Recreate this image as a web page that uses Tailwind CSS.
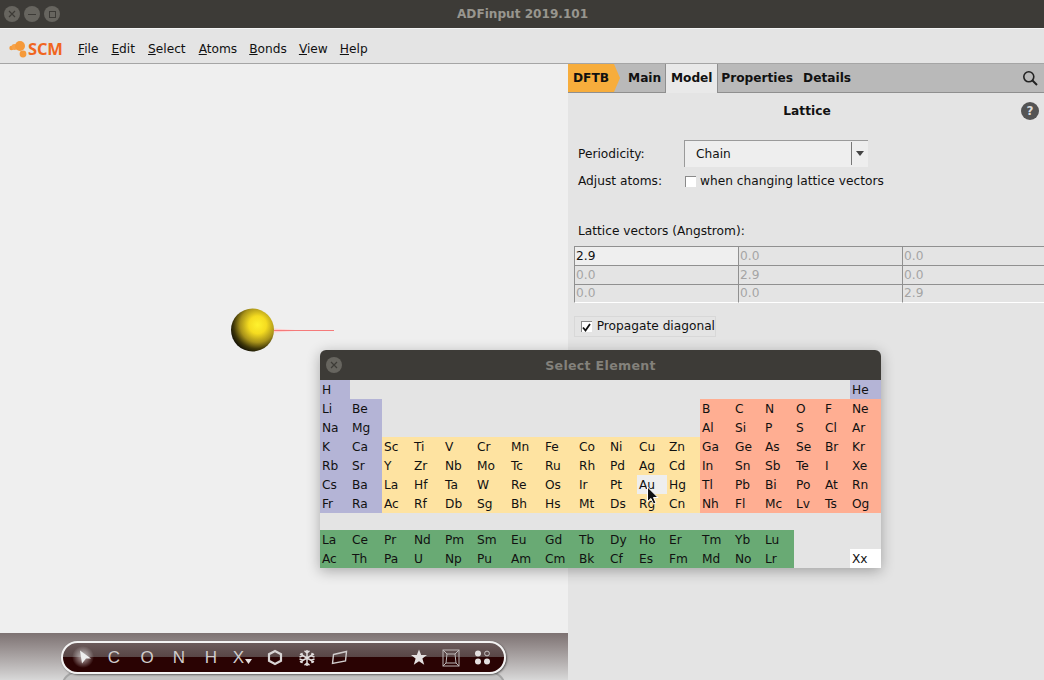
<!DOCTYPE html>
<html lang="en">
<head>
<meta charset="UTF-8">
<title>ADFinput 2019.101</title>
<script src="https://cdn.jsdelivr.net/npm/@tailwindcss/browser@4"></script>
</head>
<body class="w-[1044px] h-[680px] overflow-hidden relative bg-[#efefef] text-[#111] font-['DejaVu_Sans',sans-serif] text-[12.2px] leading-none">

<!-- title bar -->
<header class="h-[29px] bg-[#3d3b37] border-b border-[#f4f4f4] flex items-center relative">
  <div class="flex gap-[4px] pl-[4px]">
    <span class="w-4 h-4 rounded-full bg-[#67655f] flex items-center justify-center"><svg width="8" height="8" viewBox="0 0 8 8" stroke="#3d3b37" stroke-width="1.2"><path d="M1 1l6 6M7 1l-6 6"/></svg></span>
    <span class="w-4 h-4 rounded-full bg-[#67655f] flex items-center justify-center"><span class="w-2 h-px bg-[#3d3b37]"></span></span>
    <span class="w-4 h-4 rounded-full bg-[#67655f] flex items-center justify-center"><span class="w-[7px] h-[7px] border border-[#3d3b37]"></span></span>
  </div>
  <div class="absolute left-[457px] top-[8px] font-bold text-[#98968f] text-[12.1px]">ADFinput 2019.101</div>
</header>

<!-- menu bar -->
<nav class="h-[35px] bg-[#e4e4e4] border-b border-[#a5a5a5] flex items-center pt-[6px]">
  <div class="flex items-center pl-[9px] w-[78px]">
    <svg width="20" height="18" viewBox="0 0 20 18" fill="#f59a3a"><circle cx="2.5" cy="8" r="2.2"/><circle cx="5.5" cy="7" r="3" fill="#f6a24a"/><circle cx="11" cy="6" r="5"/><circle cx="14" cy="14" r="3.4"/></svg>
    <span class="font-['Open_Sans',sans-serif] font-bold text-[16.5px] text-[#f0661f] -ml-[1px] tracking-[-0.2px]">SCM</span>
  </div>
  <div class="flex gap-[13px] pt-[1px]">
    <span><u>F</u>ile</span><span><u>E</u>dit</span><span><u>S</u>elect</span><span><u>A</u>toms</span><span class="-ml-[1px]"><u>B</u>onds</span><span class="-ml-[1px]"><u>V</u>iew</span><span class="-ml-[1px]"><u>H</u>elp</span>
  </div>
</nav>

<div class="flex h-[616px]">
  <!-- molecule viewport -->
  <main class="w-[568px] flex flex-col">
    <div class="flex-1 relative bg-[#efefef]">
      <svg class="absolute left-[225px] top-[240px]" width="115" height="52" viewBox="0 0 115 52">
        <defs>
          <radialGradient id="ball" cx="0.62" cy="0.38" r="0.68">
            <stop offset="0" stop-color="#fff22e"/>
            <stop offset="0.3" stop-color="#f5dc20"/>
            <stop offset="0.6" stop-color="#a8921a"/>
            <stop offset="0.82" stop-color="#403808"/>
            <stop offset="1" stop-color="#0e0d05"/>
          </radialGradient>
        </defs>
        <path d="M49 24.5L70 26V27L49 28.5Z" fill="#ffd0d0"/>
        <rect x="49" y="26" width="60" height="1" fill="#f57a7a"/>
        <circle cx="27.5" cy="26" r="21.5" fill="url(#ball)"/>
      </svg>
    </div>
    <!-- bottom toolbar -->
    <div class="h-[47px] bg-gradient-to-b from-[#7d7272] to-[#d8d8d8] pl-[61px] pt-[8px] relative overflow-hidden">
      <div class="absolute left-[61px] top-[38px] w-[445px] h-[33px] rounded-full border-2 border-[#9c9c9c]/80 bg-[#c4c4c4]"></div>
      <div class="w-[445px] h-[33px] rounded-full border-2 border-[#f3f3f3] shadow-[1px_1px_2px_rgba(0,0,0,0.5)] overflow-hidden relative bg-[linear-gradient(#6b5b5b_0,#574545_50%,#2a0303_50%,#2a0303_100%)] flex items-center text-[#d0cccc] text-[17px] font-['Liberation_Sans',sans-serif]">
        <span class="w-[35px] flex justify-end pr-[5px]"><svg width="16" height="17" viewBox="0 0 16 17" class="overflow-visible"><defs><radialGradient id="gl"><stop offset="0" stop-color="#fff" stop-opacity=".7"/><stop offset="1" stop-color="#fff" stop-opacity="0"/></radialGradient></defs><circle cx="6" cy="8" r="11" fill="url(#gl)"/><path d="M3 1.5L14 9.5H9L5 14.5Z" fill="#eee"/></svg></span>
        <span class="w-[32px] flex justify-center">C</span>
        <span class="w-[32px] flex justify-center ml-[1px]">O</span>
        <span class="w-[32px] flex justify-center">N</span>
        <span class="w-[32px] flex justify-center">H</span>
        <span class="w-[32px] flex justify-center">X<svg class="mt-[10px] ml-[1px]" width="8" height="6" viewBox="0 0 8 6" fill="#e4e0e0"><path d="M0 0H7L3.5 5Z"/></svg></span>
        <span class="w-[32px] flex justify-center"><svg width="16" height="17" viewBox="0 0 16 17" fill="none" stroke="#d8d4d4" stroke-width="2.2"><path d="M8 2L14 5.2V11.8L8 15L2 11.8V5.2Z"/></svg></span>
        <span class="w-[32px] flex justify-center"><svg width="18" height="18" viewBox="0 0 18 18" fill="none" stroke="#e0dcdc" stroke-width="1.5"><path d="M9 1V17M2 5L16 13M16 5L2 13M6.5 1.8L9 4L11.5 1.8M6.5 16.2L9 14L11.5 16.2M1.5 8L4.5 7L3.8 3.8M16.5 8L13.5 7L14.2 3.8M1.5 10L4.5 11L3.8 14.2M16.5 10L13.5 11L14.2 14.2"/></svg></span>
        <span class="w-[32px] flex justify-center"><svg width="17" height="15" viewBox="0 0 17 15" fill="none" stroke="#d0cccc" stroke-width="1.4"><path d="M2.5 4.5L15.5 1.5L14.5 11L1.5 13.5Z"/></svg></span>
        <span class="w-[32px] flex justify-center ml-[48px]"><svg width="18" height="17" viewBox="0 0 18 17" fill="#e4e0e0"><path d="M9 .5L11.2 6H17L12.4 9.6L14.2 15.8L9 12.2L3.8 15.8L5.6 9.6L1 6H6.8Z"/></svg></span>
        <span class="w-[32px] flex justify-center"><svg width="18" height="18" viewBox="0 0 18 18" fill="none" stroke="#bdb8b8" stroke-width="1"><rect x="1" y="1" width="16" height="16"/><path d="M5 5H13L14 14H4ZM1 1L5 5M17 1L13 5M1 17L4 14M17 17L14 14"/></svg></span>
        <span class="w-[32px] flex justify-center -ml-[1px]"><svg width="17" height="17" viewBox="0 0 17 17" fill="#e4e0e0"><circle cx="4" cy="4.5" r="3"/><circle cx="13" cy="4.5" r="2.4" fill="none" stroke="#c8c4c4"/><circle cx="4" cy="12.5" r="3"/><circle cx="13" cy="12.5" r="3"/></svg></span>
      </div>
    </div>
  </main>

  <!-- right panel -->
  <aside class="w-[476px] bg-[#e4e4e4] flex flex-col">
    <div class="h-[29px] bg-[#b9b9b9] border-b border-[#8f8f8f] flex items-center font-bold relative">
      <div class="h-[28px] w-[52px] bg-[#f7ad3c] [clip-path:polygon(0_0,46px_0,52px_50%,46px_100%,0_100%)] flex items-center pl-[5px]">DFTB</div>
      <span class="ml-[8px]">Main</span>
      <div class="ml-[4px] h-[29px] w-[53px] bg-[#e9e9e9] border-x border-[#8f8f8f] flex items-center justify-center">Model</div>
      <span class="ml-[3px]">Properties</span>
      <span class="ml-[10px]">Details</span>
      <svg class="absolute right-[6px] top-[6px]" width="16" height="16" viewBox="0 0 16 16" fill="none" stroke="#222" stroke-width="1.6"><circle cx="6.8" cy="6.8" r="5"/><path d="M10.5 10.5L15 15" stroke-width="2"/></svg>
    </div>

    <div class="relative h-[36px] flex items-center justify-center font-bold pt-[1px] pl-[2px]">
      Lattice
      <span class="absolute right-[5px] top-[9px] w-[18px] h-[18px] rounded-full bg-[#545454] text-[#ddd] text-[12px] flex items-center justify-center">?</span>
    </div>

    <div class="flex items-center h-[27px] mt-[11px] pl-[10px]">
      <span class="w-[106px] pt-[1px]">Periodicity:</span>
      <div class="w-[184px] h-[27px] bg-[#eeeeee] border-t border-l border-[#9a9a9a] flex items-center relative">
        <span class="pl-[11px]">Chain</span>
        <div class="absolute right-[0px] top-[1px] h-[23px] w-[17px] border-l border-[#777] flex items-center justify-center"><svg width="8" height="5" viewBox="0 0 8 5" fill="#444"><path d="M0 0H8L4 5Z"/></svg></div>
      </div>
    </div>

    <div class="flex items-center h-[20px] mt-[4px] pl-[10px]">
      <span class="w-[107px]">Adjust atoms:</span>
      <span class="w-[11px] h-[11px] bg-white border-t border-l border-[#8a8a8a]"></span>
      <span class="ml-[4px]">when changing lattice vectors</span>
    </div>

    <div class="pl-[10px] mt-[34px] h-[14px]">Lattice vectors (Angstrom):</div>

    <div class="mt-[7px] ml-[6px] w-[470px] grid grid-cols-[164px_164px_142px] grid-rows-[19px_19px_19px] text-[#a4a4a4]">
      <div class="border-t border-l border-[#909090] pl-[1px] flex items-center bg-[#efefef] text-[#111]">2.9</div>
      <div class="border-t border-l border-[#909090] pl-[1px] flex items-center">0.0</div>
      <div class="border-t border-l border-[#909090] pl-[1px] flex items-center">0.0</div>
      <div class="border-t border-l border-[#909090] pl-[1px] flex items-center">0.0</div>
      <div class="border-t border-l border-[#909090] pl-[1px] flex items-center">2.9</div>
      <div class="border-t border-l border-[#909090] pl-[1px] flex items-center">0.0</div>
      <div class="border-y border-l border-t-[#909090] border-l-[#909090] border-b-white pl-[1px] flex items-center">0.0</div>
      <div class="border-y border-l border-t-[#909090] border-l-[#909090] border-b-white pl-[1px] flex items-center">0.0</div>
      <div class="border-y border-l border-t-[#909090] border-l-[#909090] border-b-white pl-[1px] flex items-center">2.9</div>
    </div>

    <div class="mt-[13px] ml-[6px] w-[142px] h-[21px] border border-[#d8d8d8] flex items-center pl-[6px] whitespace-nowrap">
      <span class="w-[11px] h-[11px] bg-white border-t border-l border-[#8a8a8a] flex items-center justify-center"><svg width="9" height="9" viewBox="0 0 9 9" fill="none" stroke="#111" stroke-width="1.8"><path d="M1 4.5L3.5 7.5L8 1"/></svg></span>
      <span class="ml-[5px]">Propagate diagonal</span>
    </div>
  </aside>
</div>

<!-- select element window -->
<section class="absolute left-[320px] top-[350px] w-[561px] h-[218px] rounded-t-[6px] overflow-hidden bg-[#e4e4e4] shadow-[0_3px_14px_rgba(0,0,0,0.3)]">
  <div class="h-[30px] bg-[#3d3b37] flex items-center justify-center relative">
    <span class="absolute left-[6px] top-[7px] w-4 h-4 rounded-full bg-[#67655f] flex items-center justify-center"><svg width="8" height="8" viewBox="0 0 8 8" stroke="#3d3b37" stroke-width="1.2"><path d="M1 1l6 6M7 1l-6 6"/></svg></span>
    <span class="font-bold text-[#83817b] text-[12.6px] tracking-[0.3px] mt-[2px]">Select Element</span>
  </div>
  <div class="grid grid-cols-[30px_32px_30px_31px_32px_34px_34px_34px_31px_29px_30px_33px_33px_30px_31px_29px_27px_31px] grid-rows-[repeat(7,19px)_17px_19px_19px] [&>span]:pl-[2px] [&>span]:pt-[1px] [&>span]:flex [&>span]:items-center [&>.a]:bg-[#b4b4d6] [&>.t]:bg-[#fee3a1] [&>.p]:bg-[#ffae92] [&>.f]:bg-[#69aa74]">
    <span class="a">H</span><span class="col-start-18 a">He</span>
    <span class="a">Li</span><span class="a">Be</span><span class="col-start-13 p">B</span><span class="p">C</span><span class="p">N</span><span class="p">O</span><span class="p">F</span><span class="p">Ne</span>
    <span class="a">Na</span><span class="a">Mg</span><span class="col-start-13 p">Al</span><span class="p">Si</span><span class="p">P</span><span class="p">S</span><span class="p">Cl</span><span class="p">Ar</span>
    <span class="a">K</span><span class="a">Ca</span><span class="t">Sc</span><span class="t">Ti</span><span class="t">V</span><span class="t">Cr</span><span class="t">Mn</span><span class="t">Fe</span><span class="t">Co</span><span class="t">Ni</span><span class="t">Cu</span><span class="t">Zn</span><span class="p">Ga</span><span class="p">Ge</span><span class="p">As</span><span class="p">Se</span><span class="p">Br</span><span class="p">Kr</span>
    <span class="a">Rb</span><span class="a">Sr</span><span class="t">Y</span><span class="t">Zr</span><span class="t">Nb</span><span class="t">Mo</span><span class="t">Tc</span><span class="t">Ru</span><span class="t">Rh</span><span class="t">Pd</span><span class="t">Ag</span><span class="t">Cd</span><span class="p">In</span><span class="p">Sn</span><span class="p">Sb</span><span class="p">Te</span><span class="p">I</span><span class="p">Xe</span>
    <span class="a">Cs</span><span class="a">Ba</span><span class="t">La</span><span class="t">Hf</span><span class="t">Ta</span><span class="t">W</span><span class="t">Re</span><span class="t">Os</span><span class="t">Ir</span><span class="t">Pt</span><span class="bg-[#eeeeee]">Au</span><span class="t">Hg</span><span class="p">Tl</span><span class="p">Pb</span><span class="p">Bi</span><span class="p">Po</span><span class="p">At</span><span class="p">Rn</span>
    <span class="a">Fr</span><span class="a">Ra</span><span class="t">Ac</span><span class="t">Rf</span><span class="t">Db</span><span class="t">Sg</span><span class="t">Bh</span><span class="t">Hs</span><span class="t">Mt</span><span class="t">Ds</span><span class="t">Rg</span><span class="t">Cn</span><span class="p">Nh</span><span class="p">Fl</span><span class="p">Mc</span><span class="p">Lv</span><span class="p">Ts</span><span class="p">Og</span>
    <span class="col-span-18"></span>
    <span class="f">La</span><span class="f">Ce</span><span class="f">Pr</span><span class="f">Nd</span><span class="f">Pm</span><span class="f">Sm</span><span class="f">Eu</span><span class="f">Gd</span><span class="f">Tb</span><span class="f">Dy</span><span class="f">Ho</span><span class="f">Er</span><span class="f">Tm</span><span class="f">Yb</span><span class="f">Lu</span><span class="col-span-3"></span>
    <span class="f">Ac</span><span class="f">Th</span><span class="f">Pa</span><span class="f">U</span><span class="f">Np</span><span class="f">Pu</span><span class="f">Am</span><span class="f">Cm</span><span class="f">Bk</span><span class="f">Cf</span><span class="f">Es</span><span class="f">Fm</span><span class="f">Md</span><span class="f">No</span><span class="f">Lr</span><span class="col-span-2"></span><span class="bg-white">Xx</span>
  </div>
</section>

<!-- mouse pointer -->
<svg class="absolute left-[646px] top-[486px]" width="14" height="20" viewBox="0 0 14 20"><path d="M1.5 1V15.5L5 12.5L7.5 18L10 17L7.5 11.5H12Z" fill="#111" stroke="#fff" stroke-width="1"/></svg>

</body>
</html>
